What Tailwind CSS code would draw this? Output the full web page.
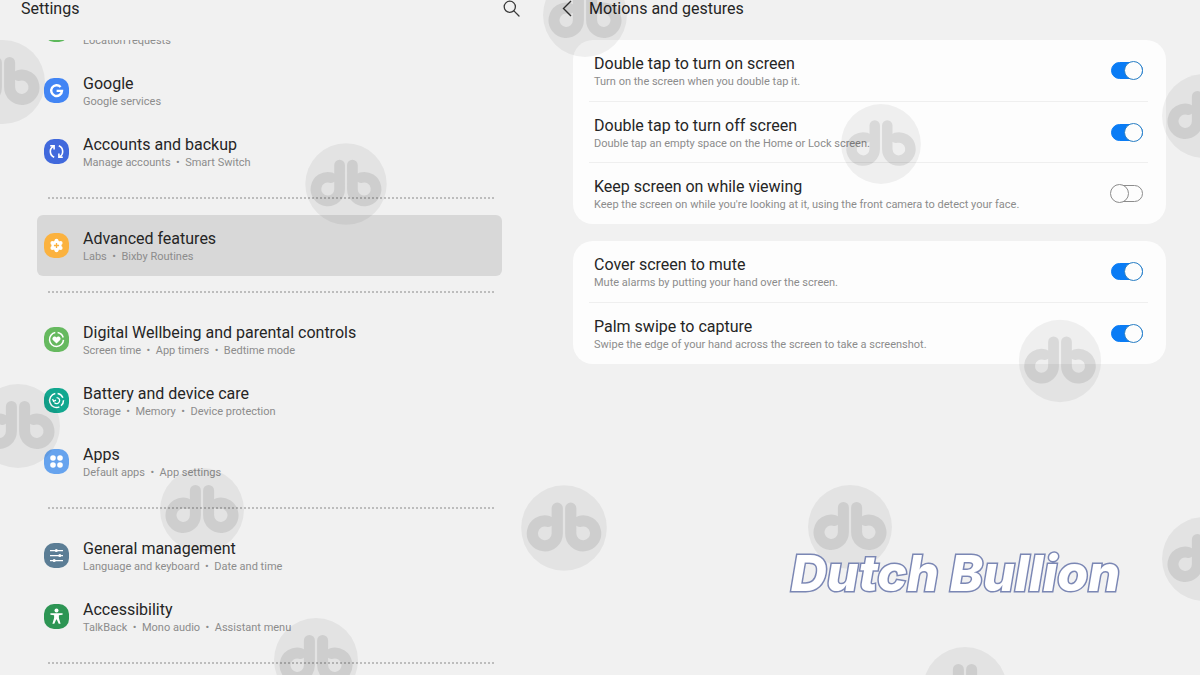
<!DOCTYPE html>
<html lang="en">
  <head>
    <meta charset="UTF-8" />
    <meta name="viewport" content="width=device-width, initial-scale=1.0" />
    <title>Settings</title>
    <script src="https://cdn.jsdelivr.net/npm/@tailwindcss/browser@4"></script>
  </head>

  <body
    class="relative flex h-screen overflow-hidden bg-[#f1f1f1] font-[Roboto,sans-serif] text-[#252525]"
  >
    <!-- Settings list -->
    <aside class="flex w-[46%] flex-col overflow-hidden">
      <header class="z-10 flex h-10 shrink-0 items-start justify-between bg-[#f1f1f1] pr-8 pl-[21px]">
        <h1 class="text-base leading-[18px]">Settings</h1>
        <button type="button" aria-label="Search">
          <svg class="size-[17px]" viewBox="0 0 17 17" fill="none" stroke="#3a3a3a" stroke-width="1.3">
            <circle cx="6.8" cy="6.8" r="5.6" />
            <path d="M10.9 10.9 16 16" stroke-linecap="round" />
          </svg>
        </button>
      </header>

      <nav class="-mt-[41px] mr-[50px] ml-[37px]">
        <a href="#" class="flex h-[61px] items-center gap-[14px] px-[7px]">
          <span class="size-[25px] rounded-[10px] bg-[#5cb85a]"></span>
          <div class="pt-[3px]">
            <div class="text-base leading-5">Location</div>
            <div class="text-[11px] leading-4 text-[#8c8c8c]">Location requests</div>
          </div>
        </a>
        <a href="#" class="flex h-[61px] items-center gap-[14px] px-[7px]">
          <svg class="size-[25px] rounded-[10px] bg-[#4285f4]" viewBox="0 0 25 25" fill="none" stroke="#fff" stroke-width="2.4">
            <path d="M16.6 9A5.4 5.4 0 1 0 18 12.9H12.6" />
          </svg>
          <div class="pt-[3px]">
            <div class="text-base leading-5">Google</div>
            <div class="text-[11px] leading-4 text-[#8c8c8c]">Google services</div>
          </div>
        </a>
        <a href="#" class="flex h-[61px] items-center gap-[14px] px-[7px]">
          <svg class="size-[25px] rounded-[10px] bg-[#4169dc]" viewBox="0 0 25 25" fill="none" stroke="#fff" stroke-width="1.6">
            <path d="M10.2 18.2C5.4 16.2 5 9.6 9.4 7.2M6.2 6.7H10.1V10.6" />
            <path d="M14.8 6.8C19.6 8.8 20 15.4 15.6 17.8M18.8 18.3H14.9V14.4" />
          </svg>
          <div class="pt-[3px]">
            <div class="text-base leading-5">Accounts and backup</div>
            <div class="text-[11px] leading-4 text-[#8c8c8c]">Manage accounts &nbsp;•&nbsp; Smart Switch</div>
          </div>
        </a>

        <div class="flex h-[33px] items-center pr-2 pb-[2px] pl-[11px]">
          <hr class="grow border-t-2 border-dotted border-[#bdbdbd]" />
        </div>

        <a href="#" class="flex h-[61px] items-center gap-[14px] rounded-md bg-[#d8d8d8] px-[7px]" aria-current="page">
          <svg class="size-[25px] rounded-[10px] bg-[#fbb23f]" viewBox="0 0 25 25">
            <g fill="#fff">
              <circle cx="12.5" cy="12.5" r="5" />
              <circle cx="12.5" cy="7.8" r="2" />
              <circle cx="12.5" cy="17.2" r="2" />
              <circle cx="8.4" cy="10.1" r="2" />
              <circle cx="16.6" cy="10.1" r="2" />
              <circle cx="8.4" cy="14.9" r="2" />
              <circle cx="16.6" cy="14.9" r="2" />
            </g>
            <path d="M12.5 9.9V15.1M9.9 12.5H15.1" stroke="#fbb23f" stroke-width="1.3" />
          </svg>
          <div class="pt-[3px]">
            <div class="text-base leading-5">Advanced features</div>
            <div class="text-[11px] leading-4 text-[#8c8c8c]">Labs &nbsp;•&nbsp; Bixby Routines</div>
          </div>
        </a>

        <div class="flex h-[33px] items-center pr-2 pb-[2px] pl-[11px]">
          <hr class="grow border-t-2 border-dotted border-[#bdbdbd]" />
        </div>

        <a href="#" class="flex h-[61px] items-center gap-[14px] px-[7px]">
          <svg class="size-[25px] rounded-[10px] bg-[#66b95f]" viewBox="0 0 25 25">
            <path d="M13.6 5.6A7 7 0 0 1 19.2 10.5M19.5 12.9A7 7 0 1 1 11.3 5.6" fill="none" stroke="#fff" stroke-width="1.5" />
            <path d="M12.5 16.6 8.9 13.1C7.1 10.9 10.5 7.9 12.5 10.4 14.5 7.9 17.9 10.9 16.1 13.1Z" fill="#fff" />
          </svg>
          <div class="pt-[3px]">
            <div class="text-base leading-5">Digital Wellbeing and parental controls</div>
            <div class="text-[11px] leading-4 text-[#8c8c8c]">Screen time &nbsp;•&nbsp; App timers &nbsp;•&nbsp; Bedtime mode</div>
          </div>
        </a>
        <a href="#" class="flex h-[61px] items-center gap-[14px] px-[7px]">
          <svg class="size-[25px] rounded-[10px] bg-[#12a78f]" viewBox="0 0 25 25" fill="none" stroke="#fff">
            <path d="M13.6 5.6A7 7 0 0 1 18.9 9.8M19.5 12.2A7 7 0 0 1 17 17.8M15.4 18.9A7 7 0 1 1 11.3 5.6" stroke-width="1.5" />
            <path d="M12.6 9.6A3 3 0 1 1 10.4 14.6M8.6 11.1 9.6 13.4 12 12.2" stroke-width="1.3" />
          </svg>
          <div class="pt-[3px]">
            <div class="text-base leading-5">Battery and device care</div>
            <div class="text-[11px] leading-4 text-[#8c8c8c]">Storage &nbsp;•&nbsp; Memory &nbsp;•&nbsp; Device protection</div>
          </div>
        </a>
        <a href="#" class="flex h-[61px] items-center gap-[14px] px-[7px]">
          <svg class="size-[25px] rounded-[10px] bg-[#66a3ee]" viewBox="0 0 25 25" fill="#fff">
            <circle cx="9" cy="9" r="2.8" />
            <circle cx="16" cy="9" r="2.8" />
            <circle cx="9" cy="16" r="2.8" />
            <circle cx="16" cy="16" r="2.8" />
          </svg>
          <div class="pt-[3px]">
            <div class="text-base leading-5">Apps</div>
            <div class="text-[11px] leading-4 text-[#8c8c8c]">Default apps &nbsp;•&nbsp; App settings</div>
          </div>
        </a>

        <div class="flex h-[33px] items-center pr-2 pb-[2px] pl-[11px]">
          <hr class="grow border-t-2 border-dotted border-[#bdbdbd]" />
        </div>

        <a href="#" class="flex h-[61px] items-center gap-[14px] px-[7px]">
          <svg class="size-[25px] rounded-[10px] bg-[#5b7d95]" viewBox="0 0 25 25" fill="#fff">
            <path d="M6 7.6H19M6 12.6H19M6 17.6H19" stroke="#fff" stroke-width="1.2" />
            <circle cx="12.3" cy="7.6" r="1.5" />
            <circle cx="15.8" cy="12.6" r="1.5" />
            <circle cx="10.2" cy="17.6" r="1.5" />
          </svg>
          <div class="pt-[3px]">
            <div class="text-base leading-5">General management</div>
            <div class="text-[11px] leading-4 text-[#8c8c8c]">Language and keyboard &nbsp;•&nbsp; Date and time</div>
          </div>
        </a>
        <a href="#" class="flex h-[61px] items-center gap-[14px] px-[7px]">
          <svg class="size-[25px] rounded-[10px] bg-[#2d9554]" viewBox="0 0 25 25" fill="#fff">
            <circle cx="12.5" cy="6.4" r="2" />
            <path d="M6.4 9.2H18.6V10.7L14.9 11.3V14L16.6 19.8H14.7L12.8 15.4H12.2L10.3 19.8H8.4L10.1 14V11.3L6.4 10.7Z" />
          </svg>
          <div class="pt-[3px]">
            <div class="text-base leading-5">Accessibility</div>
            <div class="text-[11px] leading-4 text-[#8c8c8c]">TalkBack &nbsp;•&nbsp; Mono audio &nbsp;•&nbsp; Assistant menu</div>
          </div>
        </a>

        <div class="flex h-[33px] items-center pr-2 pb-[2px] pl-[11px]">
          <hr class="grow border-t-2 border-dotted border-[#bdbdbd]" />
        </div>
      </nav>
    </aside>

    <!-- Motions and gestures -->
    <main class="flex grow flex-col pr-[34px] pl-[21px]">
      <header class="-ml-3 flex h-10 items-start gap-[11px]">
        <button type="button" aria-label="Back">
          <svg class="h-[17px] w-[17px]" viewBox="0 0 17 17" fill="none" stroke="#333" stroke-width="1.4">
            <path d="M10 1 2.5 8.5 10 16" />
          </svg>
        </button>
        <h2 class="text-base leading-[18px]">Motions and gestures</h2>
      </header>

      <section class="rounded-[20px] bg-[#fdfdfd] pr-[18px] pl-4">
        <label class="flex h-[61px] items-center justify-between px-[5px]">
          <div class="pt-[3px]">
            <div class="text-base leading-5">Double tap to turn on screen</div>
            <div class="text-[11px] leading-4 text-[#8c8c8c]">Turn on the screen when you double tap it.</div>
          </div>
          <input type="checkbox" checked class="flex h-[17px] w-8 appearance-none items-center rounded-full border border-[#8c8c8c] before:-ml-[2px] before:size-[19px] before:shrink-0 before:rounded-full before:border before:border-[#8c8c8c] before:bg-[#fdfdfd] before:content-[''] checked:justify-end checked:border-[#0a7cf5] checked:bg-[#0a7cf5] checked:before:-mr-px checked:before:border-[#2a7fc4]" />
        </label>
        <label class="flex h-[61px] items-center justify-between border-t border-[#efefef] px-[5px]">
          <div class="pt-[3px]">
            <div class="text-base leading-5">Double tap to turn off screen</div>
            <div class="text-[11px] leading-4 text-[#8c8c8c]">Double tap an empty space on the Home or Lock screen.</div>
          </div>
          <input type="checkbox" checked class="flex h-[17px] w-8 appearance-none items-center rounded-full border border-[#8c8c8c] before:-ml-[2px] before:size-[19px] before:shrink-0 before:rounded-full before:border before:border-[#8c8c8c] before:bg-[#fdfdfd] before:content-[''] checked:justify-end checked:border-[#0a7cf5] checked:bg-[#0a7cf5] checked:before:-mr-px checked:before:border-[#2a7fc4]" />
        </label>
        <label class="flex h-[62px] items-center justify-between border-t border-[#efefef] px-[5px]">
          <div class="pt-[3px]">
            <div class="text-base leading-5">Keep screen on while viewing</div>
            <div class="text-[11px] leading-4 text-[#8c8c8c]">Keep the screen on while you're looking at it, using the front camera to detect your face.</div>
          </div>
          <input type="checkbox" class="flex h-[17px] w-8 appearance-none items-center rounded-full border border-[#8c8c8c] before:-ml-[2px] before:size-[19px] before:shrink-0 before:rounded-full before:border before:border-[#8c8c8c] before:bg-[#fdfdfd] before:content-[''] checked:justify-end checked:border-[#0a7cf5] checked:bg-[#0a7cf5] checked:before:-mr-px checked:before:border-[#2a7fc4]" />
        </label>
      </section>

      <section class="mt-[17px] rounded-[20px] bg-[#fdfdfd] pr-[18px] pl-4">
        <label class="flex h-[61px] items-center justify-between px-[5px]">
          <div class="pt-[3px]">
            <div class="text-base leading-5">Cover screen to mute</div>
            <div class="text-[11px] leading-4 text-[#8c8c8c]">Mute alarms by putting your hand over the screen.</div>
          </div>
          <input type="checkbox" checked class="flex h-[17px] w-8 appearance-none items-center rounded-full border border-[#8c8c8c] before:-ml-[2px] before:size-[19px] before:shrink-0 before:rounded-full before:border before:border-[#8c8c8c] before:bg-[#fdfdfd] before:content-[''] checked:justify-end checked:border-[#0a7cf5] checked:bg-[#0a7cf5] checked:before:-mr-px checked:before:border-[#2a7fc4]" />
        </label>
        <label class="flex h-[62px] items-center justify-between border-t border-[#efefef] px-[5px]">
          <div class="pt-[3px]">
            <div class="text-base leading-5">Palm swipe to capture</div>
            <div class="text-[11px] leading-4 text-[#8c8c8c]">Swipe the edge of your hand across the screen to take a screenshot.</div>
          </div>
          <input type="checkbox" checked class="flex h-[17px] w-8 appearance-none items-center rounded-full border border-[#8c8c8c] before:-ml-[2px] before:size-[19px] before:shrink-0 before:rounded-full before:border before:border-[#8c8c8c] before:bg-[#fdfdfd] before:content-[''] checked:justify-end checked:border-[#0a7cf5] checked:bg-[#0a7cf5] checked:before:-mr-px checked:before:border-[#2a7fc4]" />
        </label>
      </section>

      <p class="z-20 mt-[179px] mr-[46px] self-end font-[Inter,sans-serif] text-[50px] leading-[60px] font-extrabold text-white italic [-webkit-text-stroke:3px_#7b87b4] [paint-order:stroke_fill]">
        Dutch Bullion
      </p>
    </main>

    <!-- Watermark stamps -->
    <svg class="pointer-events-none absolute inset-0 z-10 h-full w-full" aria-hidden="true">
      <defs>
        <g id="stamp">
          <circle r="42" fill="#000" fill-opacity="0.055" />
          <g fill="none" stroke="#000" stroke-width="11" stroke-linecap="round" opacity="0.085">
            <path d="M-6.6 -19.5V5.3A12.2 12.2 0 1 1 -15.6 -6.5" />
            <path d="M6.6 -19.5V5.3A12.2 12.2 0 1 0 15.6 -6.5" />
          </g>
        </g>
      </defs>
      <use href="#stamp" x="3" y="82" />
      <use href="#stamp" transform="translate(346 184) scale(0.97)" />
      <use href="#stamp" x="18" y="426" />
      <use href="#stamp" x="202" y="510" />
      <use href="#stamp" x="316" y="660" />
      <use href="#stamp" x="585" y="15" />
      <use href="#stamp" transform="translate(881 144) scale(0.95)" />
      <use href="#stamp" x="1204" y="116" />
      <use href="#stamp" transform="translate(1060 361) scale(0.98)" />
      <use href="#stamp" transform="translate(564 528) scale(1.02)" />
      <use href="#stamp" x="850" y="527" />
      <use href="#stamp" x="1204" y="559" />
      <use href="#stamp" x="965" y="689" />
    </svg>
  </body>
</html>
